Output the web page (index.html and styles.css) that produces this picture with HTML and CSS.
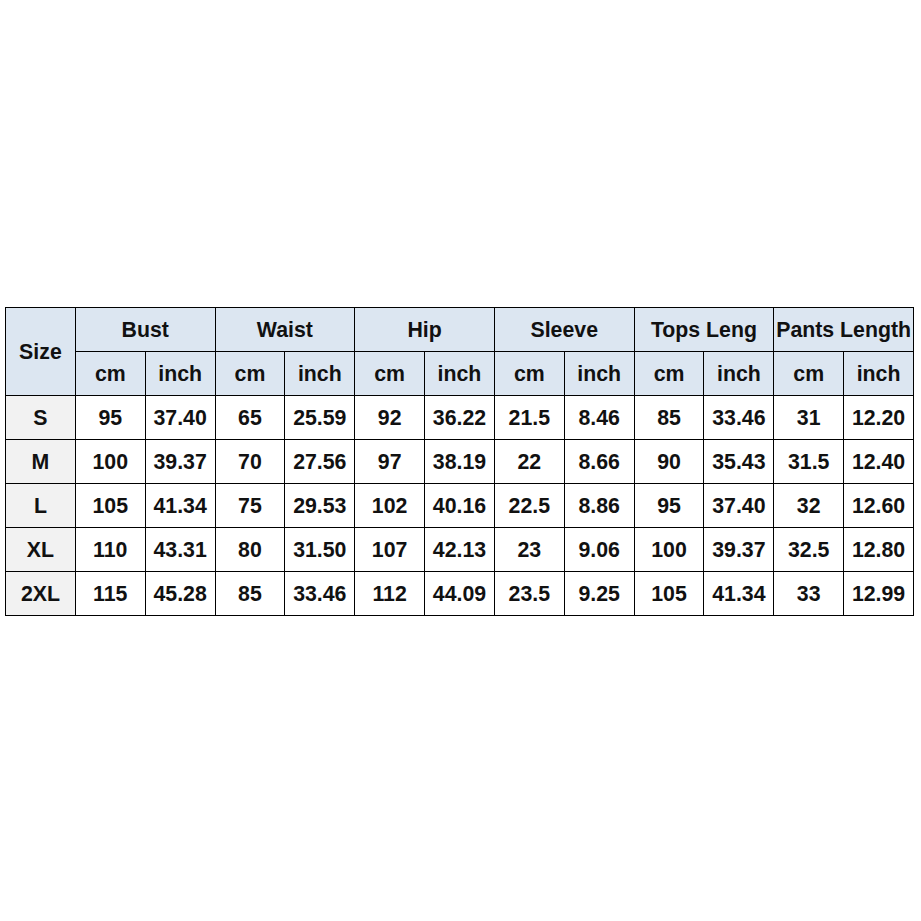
FILE: index.html
```html
<!DOCTYPE html>
<html>
<head>
<meta charset="utf-8">
<link rel="stylesheet" href="styles.css">
</head>
<body>
<div class="page">
<table class="chart">
<colgroup>
<col><col><col><col><col><col><col><col><col><col><col><col><col>
</colgroup>
<thead>
<tr>
<th class="size-head" rowspan="2">Size</th>
<th colspan="2">Bust</th>
<th colspan="2">Waist</th>
<th colspan="2">Hip</th>
<th colspan="2">Sleeve</th>
<th colspan="2">Tops Leng</th>
<th colspan="2">Pants Length</th>
</tr>
<tr>
<th>cm</th><th>inch</th>
<th>cm</th><th>inch</th>
<th>cm</th><th>inch</th>
<th>cm</th><th>inch</th>
<th>cm</th><th>inch</th>
<th>cm</th><th>inch</th>
</tr>
</thead>
<tbody>
<tr><td class="size">S</td><td>95</td><td>37.40</td><td>65</td><td>25.59</td><td>92</td><td>36.22</td><td>21.5</td><td>8.46</td><td>85</td><td>33.46</td><td>31</td><td>12.20</td></tr>
<tr><td class="size">M</td><td>100</td><td>39.37</td><td>70</td><td>27.56</td><td>97</td><td>38.19</td><td>22</td><td>8.66</td><td>90</td><td>35.43</td><td>31.5</td><td>12.40</td></tr>
<tr><td class="size">L</td><td>105</td><td>41.34</td><td>75</td><td>29.53</td><td>102</td><td>40.16</td><td>22.5</td><td>8.86</td><td>95</td><td>37.40</td><td>32</td><td>12.60</td></tr>
<tr><td class="size">XL</td><td>110</td><td>43.31</td><td>80</td><td>31.50</td><td>107</td><td>42.13</td><td>23</td><td>9.06</td><td>100</td><td>39.37</td><td>32.5</td><td>12.80</td></tr>
<tr><td class="size">2XL</td><td>115</td><td>45.28</td><td>85</td><td>33.46</td><td>112</td><td>44.09</td><td>23.5</td><td>9.25</td><td>105</td><td>41.34</td><td>33</td><td>12.99</td></tr>
</tbody>
</table>
</div>
</body>
</html>
```
FILE: styles.css
```css
html, body {
  margin: 0;
  padding: 0;
  background: #ffffff;
}
.page {
  width: 921px;
  height: 921px;
  box-sizing: border-box;
  padding: 307px 0 0 5px;
}
.chart {
  border-collapse: collapse;
  table-layout: fixed;
  width: 909px;
  font-family: "Liberation Sans", Arial, sans-serif;
  font-weight: bold;
  font-size: 21.3px;
  color: #111;
}
.chart th, .chart td {
  border: 1px solid #000;
  height: 41px;
  padding: 2px 0 0 0;
  text-align: center;
  vertical-align: middle;
  white-space: nowrap;
  overflow: visible;
}
.chart th {
  background: #dce6f1;
}
.chart td {
  background: #ffffff;
}
.chart td.size {
  background: #f2f2f2;
}
```
